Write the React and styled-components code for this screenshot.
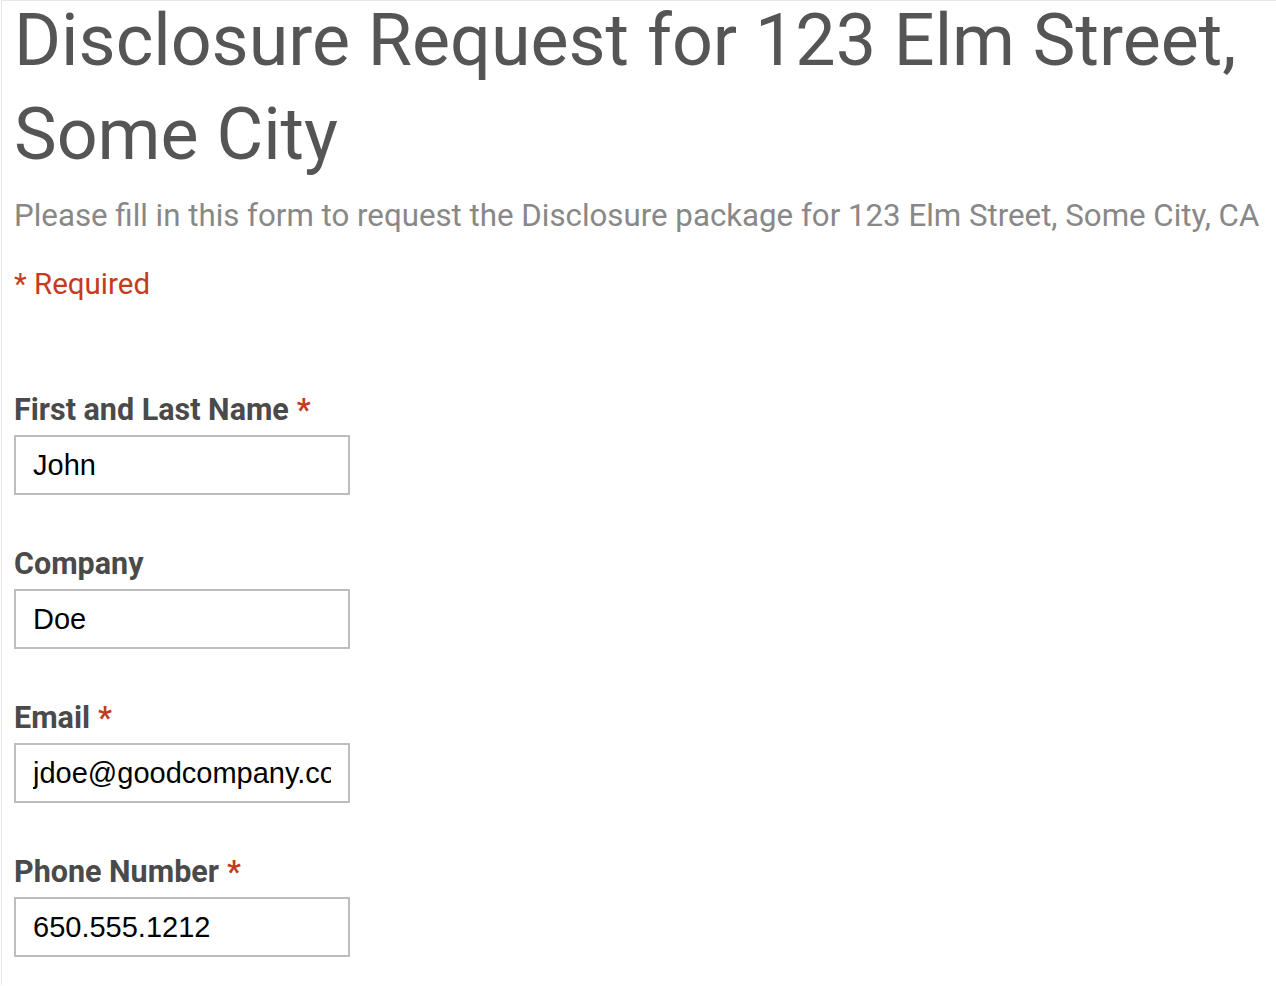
import React from "react";
import styled, { createGlobalStyle } from "styled-components";

const Global = createGlobalStyle`
  html, body { margin: 0; padding: 0; background: #fff; }
  body { font-family: Roboto, "Noto Sans", Arial, sans-serif; }
`;

const Page = styled.div`
  margin-left: 1px;
  border-top: 1px solid #e8e8e8;
  border-left: 1px solid #e8e8e8;
  padding: 0 0 0 12px;
  min-height: 985px;
  box-sizing: border-box;
`;

const Title = styled.h1`
  margin: -7px 0 0;
  font-family: Roboto, sans-serif;
  font-weight: 400;
  font-size: 71.8px;
  line-height: 94px;
  color: #555;
`;

const Description = styled.p`
  margin: 14px 0 0;
  font-size: 31.25px;
  line-height: 40px;
  color: #888;
`;

const RequiredNote = styled.p`
  margin: 28px 0 0;
  font-size: 29.5px;
  line-height: 40px;
  color: #c43b1d;
`;

const Form = styled.form`
  display: flex;
  flex-direction: column;
  gap: 49px;
  margin-top: 86px;
`;

const Field = styled.div`
  display: flex;
  flex-direction: column;
`;

const Label = styled.label`
  font-size: 30.5px;
  font-weight: 700;
  line-height: 40px;
  color: #4a4a4a;
  margin-bottom: 5px;
`;

const Star = styled.span`
  color: #c43b1d;
  margin-left: 8px;
`;

const Input = styled.input`
  box-sizing: border-box;
  width: 336px;
  height: 60px;
  border: 2px solid #bdbdbd;
  padding: 0 17px;
  font-family: "Liberation Sans", Arial, sans-serif;
  font-size: 29px;
  color: #000;
  background: #fff;
  outline: none;
`;

const fields = [
  { label: "First and Last Name", value: "John", required: true },
  { label: "Company", value: "Doe", required: false },
  { label: "Email", value: "jdoe@goodcompany.com", required: true },
  { label: "Phone Number", value: "650.555.1212", required: true },
];

export default function App() {
  return (
    <>
      <Global />
      <Page>
        <Title>Disclosure Request for 123 Elm Street, Some City</Title>
        <Description>
          Please fill in this form to request the Disclosure package for 123 Elm Street, Some City, CA
        </Description>
        <RequiredNote>* Required</RequiredNote>
        <Form onSubmit={(e) => e.preventDefault()}>
          {fields.map((f) => (
            <Field key={f.label}>
              <Label>
                {f.label}
                {f.required && <Star>*</Star>}
              </Label>
              <Input defaultValue={f.value} readOnly />
            </Field>
          ))}
        </Form>
      </Page>
    </>
  );
}
